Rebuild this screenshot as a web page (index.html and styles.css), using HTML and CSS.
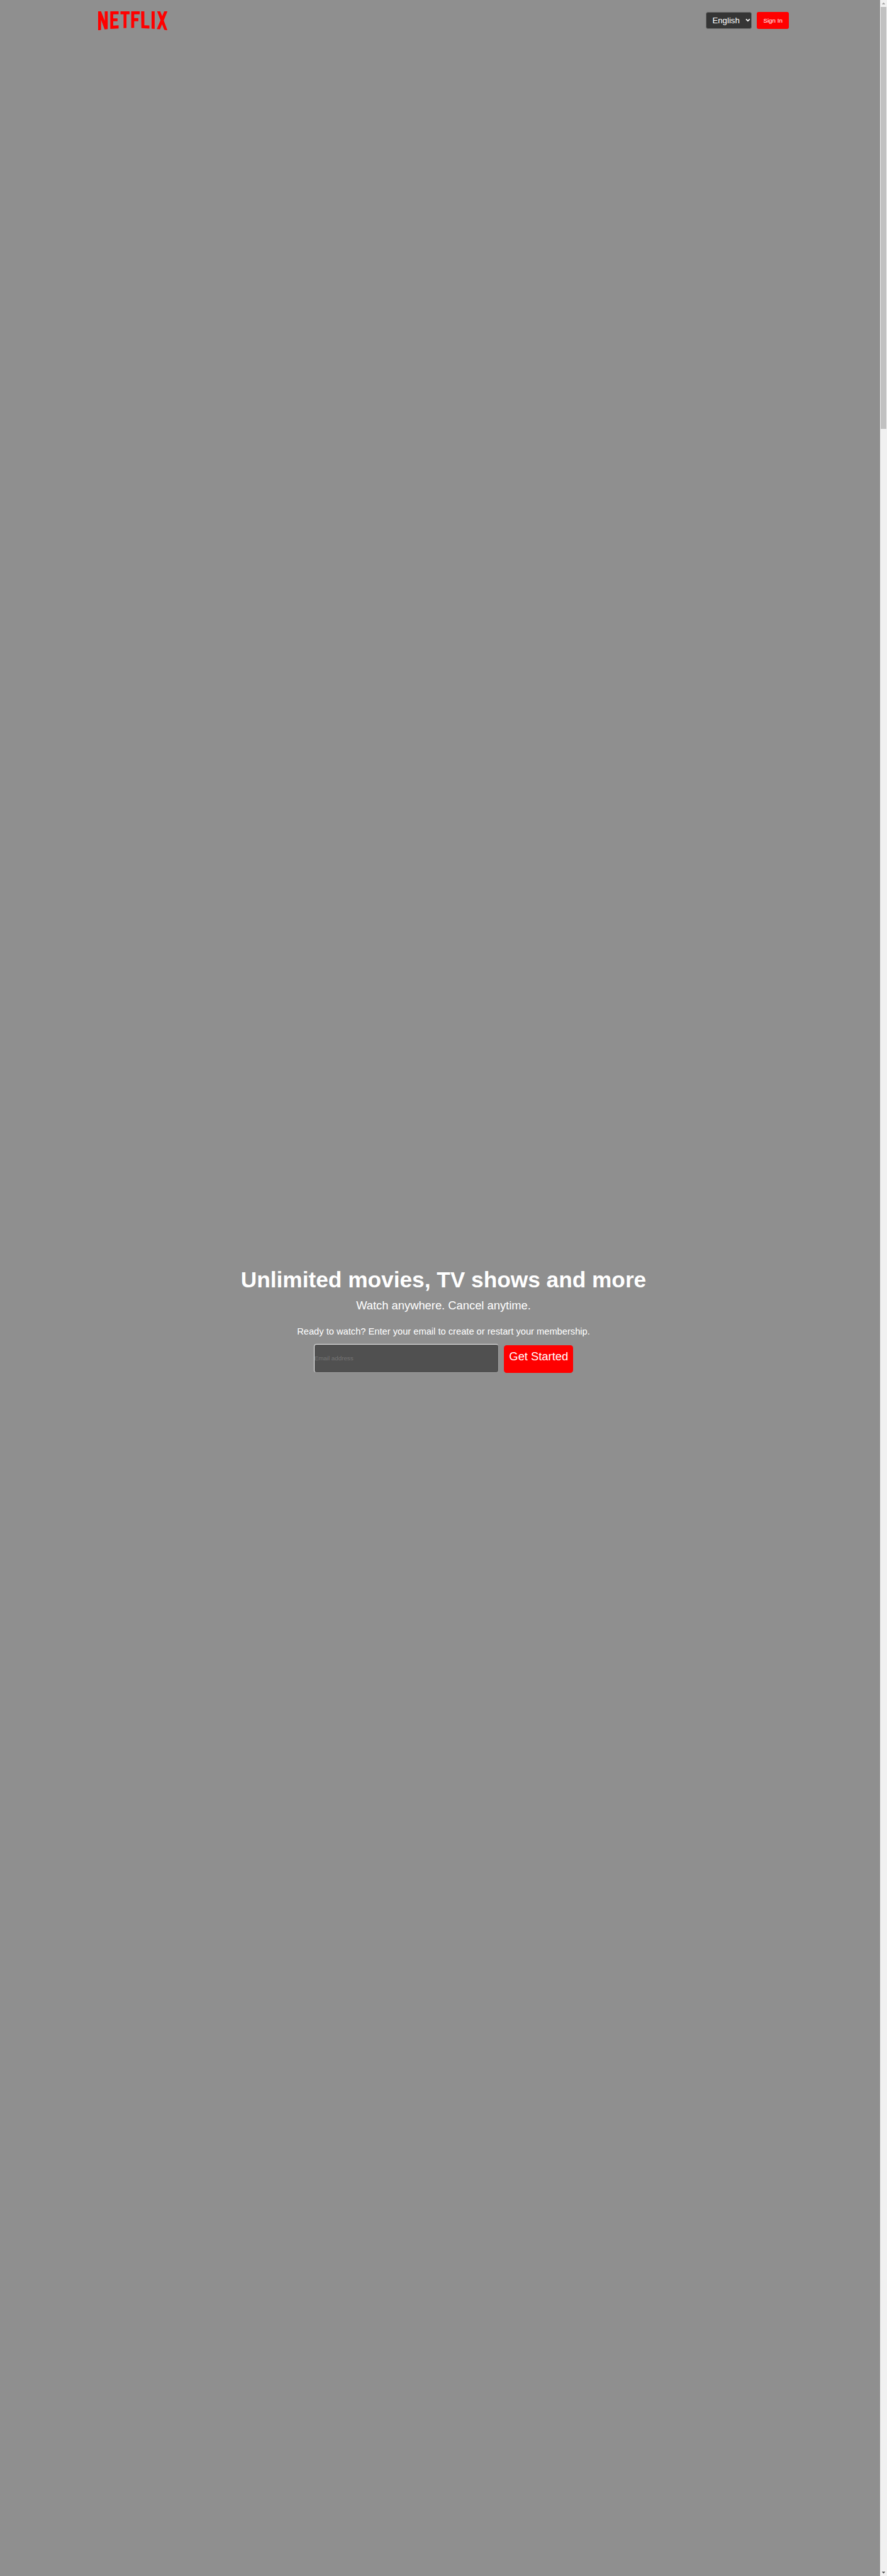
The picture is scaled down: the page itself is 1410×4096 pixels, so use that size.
FILE: index.html
```html
<!DOCTYPE html>
<html lang="en">
<head>
<meta charset="utf-8">
<title>Netflix</title>
<link rel="stylesheet" href="styles.css">
</head>
<body>
<div class="page">
  <header class="header">
    <svg class="logo" viewBox="99 71 450 124" preserveAspectRatio="none" role="img" aria-label="Netflix">
      <path d="M99 71H118L142 133V71H161V186L141 189L118 126V192L99 195Z"/>
      <path d="M178 71H232V90H197V117H225V135H197V164L232 162V182L178 185Z"/>
      <path d="M244 71H303V90H283V179L264 180V90H244Z"/>
      <path d="M314 71H369V90H333V115H360V135H333V178L314 179Z"/>
      <path d="M378 71H399V162L432 163V183L380 180Z"/>
      <path d="M446 71H466V185L446 183Z"/>
      <path d="M482 71H502L515 103L528 71H549L525 130L549 195L528 191L514 155L501 188L480 186L504 129Z"/>
    </svg>
    <div class="actions">
      <div class="language">
        <span>English</span>
        <svg class="chevron" viewBox="0 0 10 8"><path d="M1.2 1.8L5 5.6L8.8 1.8"/></svg>
      </div>
      <a class="sign-in">Sign In</a>
    </div>
  </header>
  <main class="hero">
    <h1 class="title">Unlimited movies, TV shows and more</h1>
    <p class="subtitle">Watch anywhere. Cancel anytime.</p>
    <p class="prompt">Ready to watch? Enter your email to create or restart your membership.</p>
    <div class="signup">
      <div class="email">Email address</div>
      <a class="start">Get Started</a>
    </div>
  </main>
  <div class="scrollbar">
    <svg class="arrow" viewBox="0 0 7 4"><path fill="#a3a3a3" d="M3 0H4V1H5V2H6V3H7V4H0V3H1V2H2V1H3Z"/></svg>
    <div class="thumb"></div>
    <svg class="arrow arrow-down" viewBox="0 0 7 4"><path fill="#505050" d="M0 0H7V1H6V2H5V3H4V4H3V3H2V2H1V1H0Z"/></svg>
  </div>
</div>
</body>
</html>
```
FILE: styles.css
```css
:root {
  --u: 0.734375px;
}

* {
  box-sizing: border-box;
}

body {
  margin: 0;
  background: #8f8f8f;
  color: #fff;
  font-family: "Liberation Sans", Arial, sans-serif;
}

.page {
  display: grid;
  grid-template-columns: 1fr calc(15 * var(--u));
  grid-template-rows: calc(90 * var(--u)) 1fr;
  height: 4096px;
  overflow: hidden;
}

.header {
  display: flex;
  justify-content: space-between;
  align-items: flex-start;
  padding: calc(24 * var(--u)) calc(197 * var(--u)) 0 calc(213 * var(--u));
}

.logo {
  width: calc(150 * var(--u));
  height: calc(41.3 * var(--u));
  fill: #f00;
}

.actions {
  display: flex;
  align-items: center;
  gap: calc(10.5 * var(--u));
  padding-top: calc(2 * var(--u));
}

.language {
  display: flex;
  align-items: center;
  justify-content: space-between;
  width: calc(99.5 * var(--u));
  height: calc(36 * var(--u));
  padding: 0 calc(2 * var(--u)) 0 calc(12.7 * var(--u));
  border: 1px solid #6e6e6e;
  border-radius: calc(4.5 * var(--u));
  background: #353535;
  font-size: calc(18 * var(--u));
}

.chevron {
  width: calc(10.5 * var(--u));
  height: calc(8.4 * var(--u));
  fill: none;
  stroke: #fff;
  stroke-width: 2.2;
}

.sign-in {
  width: calc(70 * var(--u));
  height: calc(36 * var(--u));
  border-radius: calc(4 * var(--u));
  background: #f00;
  font-size: calc(13.333 * var(--u));
  line-height: calc(37 * var(--u));
  text-align: center;
}

.hero {
  grid-row: 2;
  display: flex;
  flex-direction: column;
  align-items: center;
  padding: calc(2653 * var(--u)) 0 0 calc(15 * var(--u));
}

.title,
.subtitle,
.prompt {
  margin: 0;
  white-space: nowrap;
}

.title {
  font-size: calc(48 * var(--u));
  line-height: calc(56 * var(--u));
}

.subtitle {
  margin-top: calc(13.5 * var(--u));
  font-size: calc(25 * var(--u));
  line-height: calc(30 * var(--u));
}

.prompt {
  margin-top: calc(29.5 * var(--u));
  font-size: calc(20 * var(--u));
  line-height: calc(24 * var(--u));
}

.signup {
  display: flex;
  align-items: flex-end;
  gap: calc(10.5 * var(--u));
  margin-top: calc(14.5 * var(--u));
}

.email {
  width: calc(401.5 * var(--u));
  height: calc(62 * var(--u));
  border: 1px solid;
  border-color: #f0f0f0 #a0a0a0 #a0a0a0 #f0f0f0;
  border-radius: calc(6 * var(--u));
  background: #505050;
  color: #757575;
  font-size: calc(13.333 * var(--u));
  line-height: calc(61 * var(--u));
}

.start {
  width: calc(150 * var(--u));
  height: calc(60 * var(--u));
  border-radius: calc(6 * var(--u));
  background: #f00;
  font-size: calc(25 * var(--u));
  line-height: calc(50 * var(--u));
  text-align: center;
}

.scrollbar {
  grid-column: 2;
  grid-row: 1 / 3;
  display: flex;
  flex-direction: column;
  align-items: center;
  padding: calc(6 * var(--u)) 0 calc(6 * var(--u));
  background: #f1f1f1;
}

.arrow {
  flex: none;
  width: calc(7 * var(--u));
  height: calc(4 * var(--u));
}

.thumb {
  width: calc(11 * var(--u));
  height: calc(913 * var(--u));
  margin-top: calc(5 * var(--u));
  background: #c1c1c1;
}

.arrow-down {
  margin-top: auto;
}
```
